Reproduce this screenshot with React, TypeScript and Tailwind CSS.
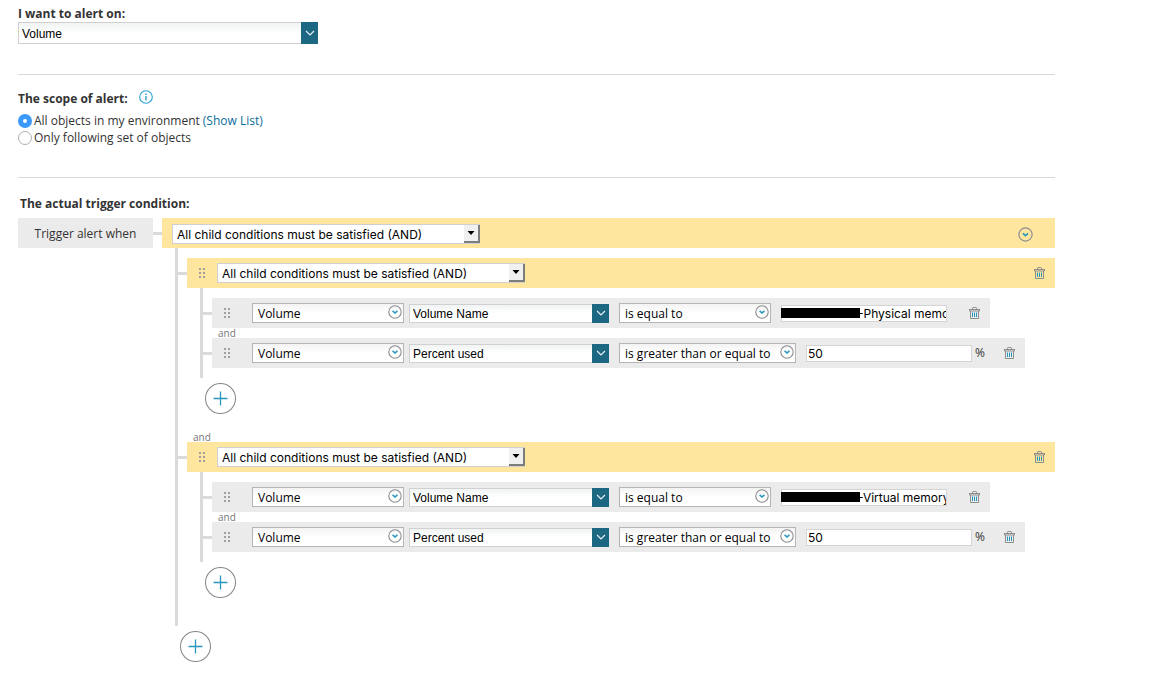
import { useState } from "react";
import type { ReactNode } from "react";

type Condition = {
  kind: "condition";
  object: string;
  field: string;
  operator: string;
  value: string;
  masked?: boolean;
  unit?: string;
};

type Group = {
  kind: "group";
  children: TreeNode[];
};

type TreeNode = Condition | Group;

function memoryGroup(name: string): Group {
  return {
    kind: "group",
    children: [
      {
        kind: "condition",
        object: "Volume",
        field: "Volume Name",
        operator: "is equal to",
        value: `-${name} memory`,
        masked: true,
      },
      {
        kind: "condition",
        object: "Volume",
        field: "Percent used",
        operator: "is greater than or equal to",
        value: "50",
        unit: "%",
      },
    ],
  };
}

const trigger: Group = {
  kind: "group",
  children: [memoryGroup("Physical"), memoryGroup("Virtual")],
};

function InfoIcon() {
  return (
    <svg width="14" height="14" viewBox="0 0 14 14" fill="none">
      <circle cx="7" cy="7" r="6.3" stroke="#2b9fd0" strokeWidth="1.1" />
      <path d="M7 6v4.5M7 3.6v1.3" stroke="#2b9fd0" strokeWidth="1.4" />
    </svg>
  );
}

function CircleChevron({ size }: { size: number }) {
  return (
    <svg width={size} height={size} viewBox="0 0 14 14" fill="none">
      <circle cx="7" cy="7" r="6.2" stroke="#8d8d8d" strokeWidth="1.1" />
      <path d="M4.6 5.9 7 8.1l2.4-2.2" stroke="#2596be" strokeWidth="1.5" />
    </svg>
  );
}

function TrashIcon() {
  return (
    <svg width="11" height="12" viewBox="0 0 11 12" fill="none">
      <path
        d="M3.5 2V1.2q0-.7.7-.7h2.6q.7 0 .7.7V2M0 2.5h11M.5 2v2h10V2M1.5 4v7.5h8V4"
        stroke="#8d8d8d"
      />
      <path d="M3.5 5.5V10M5.5 5.5V10M7.5 5.5V10" stroke="#2596be" />
    </svg>
  );
}

function Grip() {
  return (
    <svg width="8" height="10" viewBox="0 0 8 10" fill="#a0a0a0">
      {[0, 4, 8].map((y) => (
        <g key={y}>
          <rect x="1" y={y} width="2" height="2" />
          <rect x="5" y={y} width="2" height="2" />
        </g>
      ))}
    </svg>
  );
}

function Connector() {
  return <div className="h-[3px] w-[9px] shrink-0 bg-[#dadada]" />;
}

function DeleteButton() {
  return (
    <button type="button" aria-label="Delete" className="shrink-0">
      <TrashIcon />
    </button>
  );
}

function AddButton() {
  return (
    <button type="button" aria-label="Add condition" className="block">
      <svg width="31" height="31" viewBox="0 0 31 31" fill="none">
        <circle cx="15.5" cy="15.5" r="15" stroke="#8d8d8d" strokeWidth="1.1" />
        <path d="M15.5 8.5v14M8.5 15.5h14" stroke="#2596be" strokeWidth="1.3" />
      </svg>
    </button>
  );
}

function ComboBox({ id, label, value }: { id?: string; label?: string; value: string }) {
  const [text, setText] = useState(value);
  return (
    <div className="flex h-full">
      <input
        id={id}
        type="text"
        aria-label={label}
        value={text}
        onChange={(e) => setText(e.target.value)}
        className="min-w-0 flex-1 border border-r-0 border-[#d0d0d0] bg-linear-to-b from-[#f1f4f4] to-white to-50% px-[3px] pt-[2px] font-['Liberation_Sans',sans-serif] text-xs text-black outline-none"
      />
      <button
        type="button"
        aria-label="Open list"
        className="flex w-[17px] items-center justify-center bg-[#1c6782]"
      >
        <svg width="10" height="6" viewBox="0 0 10 6" fill="none">
          <path d="M1 1l4 4 4-4" stroke="#e4f0f4" strokeWidth="1.2" />
        </svg>
      </button>
    </div>
  );
}

function RoundSelect({ label, value, children }: { label: string; value: string; children?: ReactNode }) {
  return (
    <div className="relative">
      <select
        aria-label={label}
        defaultValue={value}
        className="block h-5 w-full appearance-none border border-[#b5b5b5] bg-linear-to-b from-[#f3f3f3] to-white to-50% pt-[2px] pr-6 pl-[5px] text-xs text-black outline-none"
      >
        <option>{value}</option>
        {children}
      </select>
      <span className="pointer-events-none absolute top-[2px] right-[2px]">
        <CircleChevron size={14} />
      </span>
    </div>
  );
}

function LogicSelect() {
  return (
    <div className="relative w-[308px]">
      <select
        aria-label="Child conditions"
        className="block h-5 w-full appearance-none border border-[#d0d0d0] bg-white pt-px pr-5 pl-1 font-[Inter,sans-serif] text-xs text-black outline-none"
      >
        <option>All child conditions must be satisfied (AND)</option>
        <option>At least one child condition must be satisfied (OR)</option>
      </select>
      <span className="pointer-events-none absolute inset-y-px right-0 flex w-4 items-center justify-center border-r-2 border-b-2 border-[#7d7d7d] bg-[#f0f0f0]">
        <svg width="8" height="4" viewBox="0 0 8 4">
          <path d="M0.5 0h7L4 4z" fill="#000" />
        </svg>
      </span>
    </div>
  );
}

function ValueInput({ value, masked }: { value: string; masked?: boolean }) {
  const [text, setText] = useState(value);
  return (
    <div className="relative ml-[10px] w-[166px]">
      <input
        type="text"
        aria-label="Value"
        value={text}
        onChange={(e) => setText(e.target.value)}
        className={`block h-[17px] w-full border border-[#d4d4d4] bg-white font-[Inter,sans-serif] text-xs text-black outline-none ${
          masked ? "pl-[76px]" : "pl-px"
        }`}
      />
      {masked && <span className="absolute top-[3px] left-0 h-[10px] w-[79px] bg-black" />}
    </div>
  );
}

function ConditionRow({ condition }: { condition: Condition }) {
  const { object, field, operator, value, masked, unit } = condition;
  return (
    <div className="flex items-center">
      <Connector />
      <div className="flex h-[30px] items-center bg-[#ebebeb] pr-[10px]">
        <div className="flex w-10 justify-center pr-[10px]">
          <Grip />
        </div>
        <div className="w-[152px]">
          <RoundSelect label="Object type" value={object} />
        </div>
        <div className="ml-[5px] h-[19px] w-[200px]">
          <ComboBox label="Field" value={field} />
        </div>
        <div className={unit ? "ml-[10px] w-[177px]" : "ml-[10px] w-[152px]"}>
          <RoundSelect label="Operator" value={operator} />
        </div>
        <ValueInput value={value} masked={masked} />
        <span className={unit ? "w-8 pl-[3px]" : "w-[22px]"}>{unit}</span>
        <DeleteButton />
      </div>
    </div>
  );
}

function GroupNode({ group, root }: { group: Group; root?: boolean }) {
  return (
    <div className={root ? "min-w-0 flex-1" : "mb-[18px]"}>
      <div className="flex items-center">
        <Connector />
        <div
          className={`flex h-[30px] flex-1 items-center bg-[#ffe69e] pr-[10px] ${
            root ? "pt-[2px] pl-[10px]" : ""
          }`}
        >
          {!root && (
            <div className="flex w-[30px] justify-center">
              <Grip />
            </div>
          )}
          <LogicSelect />
          <div className="ml-auto flex">
            {root ? (
              <button type="button" aria-label="Group options" className="mr-3">
                <CircleChevron size={15} />
              </button>
            ) : (
              <DeleteButton />
            )}
          </div>
        </div>
      </div>
      <div className="ml-[22px] border-l-3 border-[#dadada] py-[10px]">
        {group.children.map((child, i) => (
          <div key={i}>
            {i > 0 && <div className="h-[10px] pl-[15px] text-[10px] leading-[10px] text-[#777]">and</div>}
            {child.kind === "group" ? <GroupNode group={child} /> : <ConditionRow condition={child} />}
          </div>
        ))}
      </div>
      <div className="mt-[5px] ml-[27px]">
        <AddButton />
      </div>
    </div>
  );
}

export default function App() {
  const [scope, setScope] = useState("all");
  const radio =
    "size-[14px] appearance-none rounded-full border border-[#b0b0b0] bg-white checked:border-[5px] checked:border-[#3b99fc]";

  return (
    <main className="bg-white pt-[5px] pr-[97px] pb-8 pl-[18px] font-['Open_Sans',sans-serif] text-xs text-[#333]">
      <section className="border-b border-[#d9d9d9] pb-[30px]">
        <label htmlFor="alert-on" className="block leading-[17px] font-bold">
          I want to alert on:
        </label>
        <div className="h-[22px] w-[300px]">
          <ComboBox id="alert-on" value="Volume" />
        </div>
      </section>

      <section className="border-b border-[#d9d9d9] pt-[15px] pb-[31px]">
        <div className="flex items-start gap-[11px]">
          <h2 className="leading-[17px] font-bold">The scope of alert:</h2>
          <InfoIcon />
        </div>
        <div className="mt-[5px]">
          <div className="flex h-[17px] items-center gap-[2px]">
            <input
              id="scope-all"
              type="radio"
              name="scope"
              checked={scope === "all"}
              onChange={() => setScope("all")}
              className={radio}
            />
            <label htmlFor="scope-all">All objects in my environment</label>
            <a href="#list" className="ml-px text-[#0b6d9c]">
              (Show List)
            </a>
          </div>
          <div className="flex h-[17px] items-center gap-[2px]">
            <input
              id="scope-set"
              type="radio"
              name="scope"
              checked={scope === "set"}
              onChange={() => setScope("set")}
              className={radio}
            />
            <label htmlFor="scope-set">Only following set of objects</label>
          </div>
        </div>
      </section>

      <section className="pt-[17px]">
        <h2 className="pl-[2px] leading-[17px] font-bold">The actual trigger condition:</h2>
        <div className="mt-[6px] flex items-start">
          <div className="flex h-[30px] w-[135px] items-center justify-center bg-[#ebebeb] pt-[2px]">
            Trigger alert when
          </div>
          <GroupNode group={trigger} root />
        </div>
      </section>
    </main>
  );
}
